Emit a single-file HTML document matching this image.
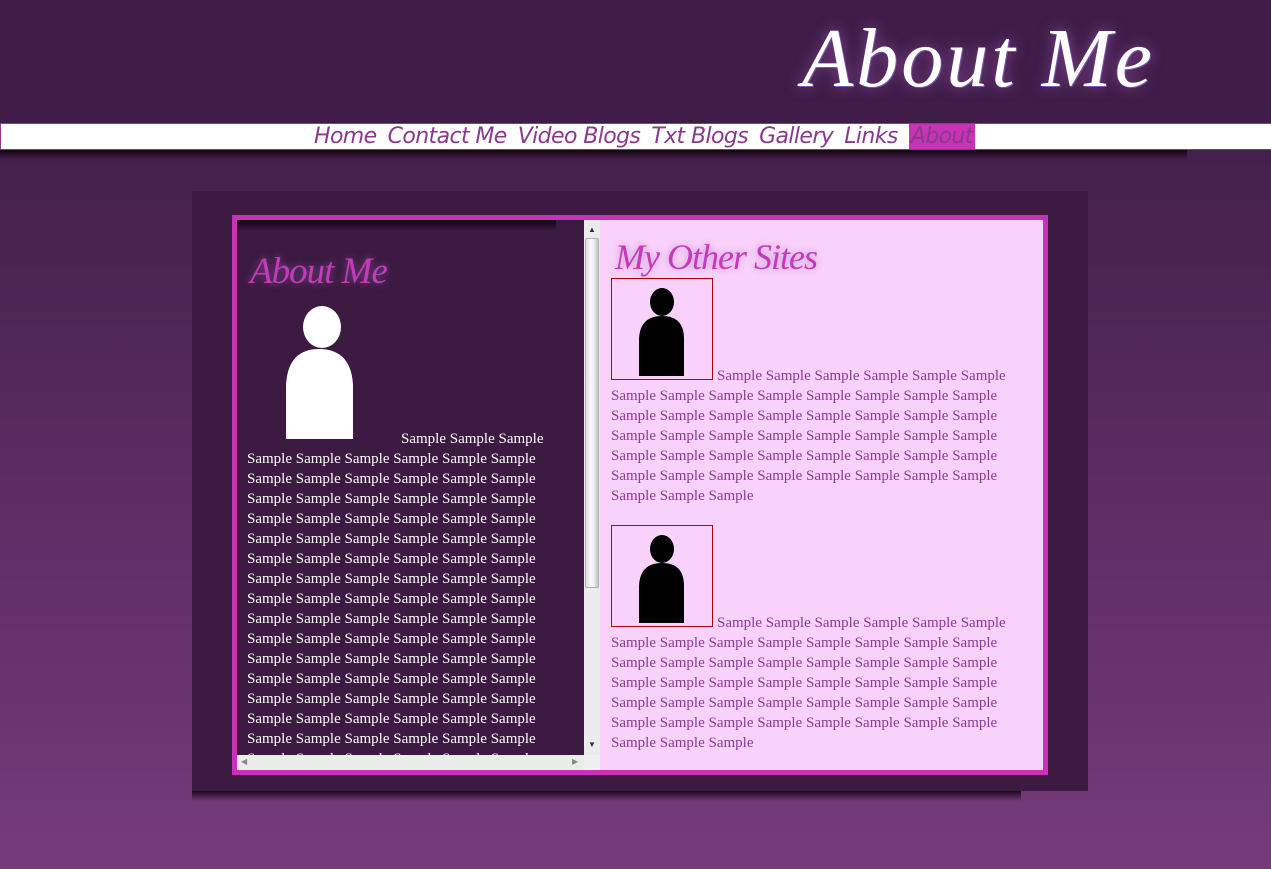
<!DOCTYPE html>
<html><head><meta charset="utf-8"><style>
*{margin:0;padding:0;box-sizing:border-box}
body{width:1271px;height:869px;overflow:hidden;position:relative;background:linear-gradient(#45204d 0px,#45204d 160px,#773a7b 869px);font-family:"Liberation Serif",serif}
.abs{position:absolute}
.hdr{left:0;top:0;width:1271px;height:123px;background:#3f1d48}
.title{left:802px;top:10px;font:italic 84px "Liberation Serif",serif;color:#fff;text-shadow:0 0 14px #8a4a9a,1px 1px 0 #6a5fb0;letter-spacing:3px}
.nav{left:0;top:123px;width:1271px;height:27px;background:#fff;border:1px solid #8a3a8e;border-right:none}
.navt{left:314px;top:125px;font:italic 22px "DejaVu Sans",sans-serif;color:#8a3a8e;white-space:nowrap;letter-spacing:-0.6px;line-height:24px}
.navt span{margin-right:11px}
.navt .on{background:#c832b4;padding:0 2px}
.shd{left:0;top:150px;width:1187px;height:10px;background:linear-gradient(#140510,rgba(60,26,65,0))}
.cont{left:192px;top:191px;width:896px;height:600px;background:#3c1a41}
.shd2{left:192px;top:791px;width:829px;height:10px;background:linear-gradient(#1a0a1c,rgba(100,50,105,0))}
.box{left:232px;top:215px;width:816px;height:560px;background:#c832b4}
.left{left:237px;top:220px;width:347px;height:535px;background:#3c1a41;overflow:hidden}
.lband{left:0;top:0;width:319px;height:11px;background:linear-gradient(#0e030e,#3c1a41)}
.lh{left:13px;top:30px;font:italic 37px "Liberation Serif",serif;color:#c43ab8;text-shadow:0 0 8px #7a4a8a;letter-spacing:-1px}
.lt{color:#fff;font-size:15px;line-height:20px;white-space:nowrap}
.vs{left:584px;top:220px;width:16px;height:535px;background:#ececec}
.thumb{left:585px;top:238px;width:14px;height:350px;background:linear-gradient(90deg,#e0e0e0,#fafafa,#c8c8c8);border:1px solid #b0b0b0;border-radius:2px}
.hs{left:237px;top:755px;width:347px;height:15px;background:#ececec}
.corner{left:584px;top:755px;width:16px;height:15px;background:#f0f0f0}
.right{left:600px;top:220px;width:443px;height:550px;background:#f9d2fb}
.rh{left:15px;top:16px;font:italic 36px "Liberation Serif",serif;color:#c43ab8;text-shadow:0 0 8px #c090c8;letter-spacing:-1px}
.rt{color:#8b3a95;font-size:15px;line-height:20px;white-space:nowrap}
.img{width:102px;height:102px;border:1px solid #b00010}
</style></head><body>
<div class="abs hdr"></div>
<div class="abs title">About Me</div>
<div class="abs nav"></div>
<div class="abs navt"><span>Home</span><span>Contact Me</span><span>Video Blogs</span><span>Txt Blogs</span><span>Gallery</span><span>Links</span><span class="on">About</span></div>
<div class="abs shd"></div>
<div class="abs cont"></div>
<div class="abs shd2"></div>
<div class="abs box"></div>
<div class="abs left">
 <div class="abs lband"></div>
 <div class="abs lh">About Me</div>
 <svg class="abs" style="left:48px;top:85px" width="70" height="134"><ellipse cx="37" cy="22" rx="19" ry="21" fill="#fff"/><path d="M1 134 V80 Q3 44 34 44 Q66 44 68 80 V134Z" fill="#fff"/></svg>
 <div class="abs lt" style="left:164px;top:209px">Sample Sample Sample</div>
 <div class="abs lt" style="left:10px;top:229px">Sample Sample Sample Sample Sample Sample<br>Sample Sample Sample Sample Sample Sample<br>Sample Sample Sample Sample Sample Sample<br>Sample Sample Sample Sample Sample Sample<br>Sample Sample Sample Sample Sample Sample<br>Sample Sample Sample Sample Sample Sample<br>Sample Sample Sample Sample Sample Sample<br>Sample Sample Sample Sample Sample Sample<br>Sample Sample Sample Sample Sample Sample<br>Sample Sample Sample Sample Sample Sample<br>Sample Sample Sample Sample Sample Sample<br>Sample Sample Sample Sample Sample Sample<br>Sample Sample Sample Sample Sample Sample<br>Sample Sample Sample Sample Sample Sample<br>Sample Sample Sample Sample Sample Sample<br>Sample Sample Sample Sample Sample Sample</div>
</div>
<div class="abs vs"></div>
<div class="abs thumb"></div>
<div class="abs" style="left:588px;top:225px;font-size:8px;color:#333">▲</div>
<div class="abs" style="left:588px;top:740px;font-size:8px;color:#333">▼</div>
<div class="abs hs"></div>
<div class="abs corner"></div>
<div class="abs" style="left:241px;top:757px;font-size:8px;color:#888">◀</div>
<div class="abs" style="left:572px;top:757px;font-size:8px;color:#888">▶</div>
<div class="abs right">
 <div class="abs rh">My Other Sites</div>
 <div class="abs img" style="left:11px;top:58px"><svg width="100" height="100"><ellipse cx="50" cy="23" rx="12" ry="14" fill="#000"/><path d="M27 97 V60 Q28 37 50 37 Q72 37 72 60 V97Z" fill="#000"/></svg></div>
 <div class="abs rt" style="left:117px;top:146px">Sample Sample Sample Sample Sample Sample</div>
 <div class="abs rt" style="left:11px;top:166px">Sample Sample Sample Sample Sample Sample Sample Sample<br>Sample Sample Sample Sample Sample Sample Sample Sample<br>Sample Sample Sample Sample Sample Sample Sample Sample<br>Sample Sample Sample Sample Sample Sample Sample Sample<br>Sample Sample Sample Sample Sample Sample Sample Sample<br>Sample Sample Sample</div>
 <div class="abs img" style="left:11px;top:305px"><svg width="100" height="100"><ellipse cx="50" cy="23" rx="12" ry="14" fill="#000"/><path d="M27 97 V60 Q28 37 50 37 Q72 37 72 60 V97Z" fill="#000"/></svg></div>
 <div class="abs rt" style="left:117px;top:393px">Sample Sample Sample Sample Sample Sample</div>
 <div class="abs rt" style="left:11px;top:413px">Sample Sample Sample Sample Sample Sample Sample Sample<br>Sample Sample Sample Sample Sample Sample Sample Sample<br>Sample Sample Sample Sample Sample Sample Sample Sample<br>Sample Sample Sample Sample Sample Sample Sample Sample<br>Sample Sample Sample Sample Sample Sample Sample Sample<br>Sample Sample Sample</div>
</div>
</body></html>
